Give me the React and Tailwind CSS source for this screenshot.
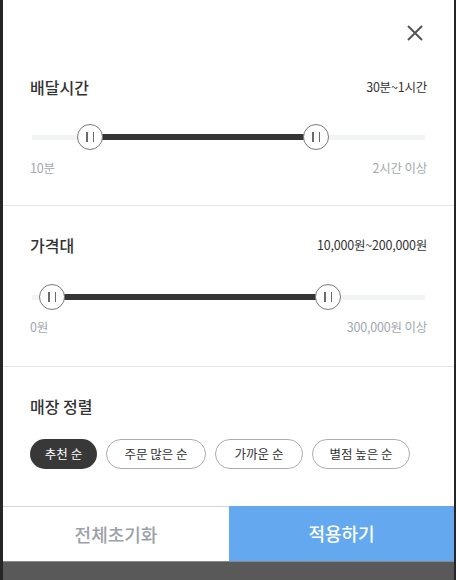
import React from "react";

const FONT = { fontFamily: '"Noto Sans CJK KR", "Noto Sans", sans-serif' };

function Thumb({ x }) {
  return (
    <div
      className="absolute top-1/2 w-[26px] h-[26px] -ml-[13px] -mt-[13px] rounded-full bg-white border-[1.5px] border-[#7a7a7a] flex items-center justify-center gap-[5px]"
      style={{ left: x }}
    >
      <span className="block w-[1.5px] h-[10px] bg-[#6a6a6a]" />
      <span className="block w-[1.5px] h-[10px] bg-[#6a6a6a]" />
    </div>
  );
}

function RangeSlider({ a, b }) {
  return (
    <div className="relative h-[26px] mx-[2px]">
      <div className="absolute left-0 right-0 top-1/2 -mt-[2px] h-[5px] bg-[#f2f3f5]" />
      <div
        className="absolute top-1/2 -mt-[3px] h-[6px] bg-[#353535]"
        style={{ left: a, width: b - a }}
      />
      <Thumb x={a} />
      <Thumb x={b} />
    </div>
  );
}

function Section({ title, value, a, b, minLabel, maxLabel, sliderGap, labelGap }) {
  return (
    <div className="px-[27px]">
      <div className="flex items-center justify-between h-[20px]">
        <span className="text-[16px] font-medium text-[#333]">{title}</span>
        <span className="text-[12.5px] text-[#333] tracking-[-0.2px]">{value}</span>
      </div>
      <div className={sliderGap}>
        <RangeSlider a={a} b={b} />
      </div>
      <div className={`${labelGap} h-[18px] flex items-center justify-between text-[12.5px] text-[#a3a8b0] tracking-[-0.2px]`}>
        <span>{minLabel}</span>
        <span>{maxLabel}</span>
      </div>
    </div>
  );
}

export default function App() {
  const chips = [
    { label: "추천 순", w: "w-[67px]", active: true },
    { label: "주문 많은 순", w: "w-[100px]" },
    { label: "가까운 순", w: "w-[88px]" },
    { label: "별점 높은 순", w: "w-[98px]" },
  ];
  return (
    <div className="w-[456px] h-[580px] bg-[#262626] pl-[3px] pr-[2px] flex flex-col" style={FONT}>
      <div className="h-[561px] bg-white flex flex-col">
        <div className="h-[66px] flex items-center justify-end pr-[31px]">
          <svg width="16" height="16" viewBox="0 0 16 16" className="block">
            <path d="M1 1 L15 15 M15 1 L1 15" stroke="#555" strokeWidth="2" strokeLinecap="butt" />
          </svg>
        </div>
        <div className="pt-[11px] pb-[28px] border-b border-[#e6e6e6]">
          <Section
            title="배달시간"
            value="30분~1시간"
            a={58}
            b={284}
            minLabel="10분"
            maxLabel="2시간 이상"
            sliderGap="mt-[27px]"
            labelGap="mt-[9px]"
          />
        </div>
        <div className="pt-[29px] pb-[30px] border-b border-[#e6e6e6]">
          <Section
            title="가격대"
            value="10,000원~200,000원"
            a={20}
            b={296}
            minLabel="0원"
            maxLabel="300,000원 이상"
            sliderGap="mt-[29px]"
            labelGap="mt-[8px]"
          />
        </div>
        <div className="flex-1 px-[27px] pt-[29px]">
          <div className="h-[20px] flex items-center">
            <span className="text-[16px] font-medium text-[#333]">매장 정렬</span>
          </div>
          <div className="mt-[23px] flex gap-[9px]">
            {chips.map((c) => (
              <div
                key={c.label}
                className={`${c.w} h-[30px] rounded-full flex items-center justify-center text-[12.5px] ${
                  c.active
                    ? "bg-[#383838] text-white"
                    : "bg-white border border-[#adadad] text-[#333]"
                }`}
              >
                {c.label}
              </div>
            ))}
          </div>
        </div>
        <div className="h-[55px] flex">
          <button className="w-[226px] h-full bg-white border-t border-[#d6d6d6] text-[18px] text-[#9aa1a9] font-medium" style={FONT}>
            전체초기화
          </button>
          <button className="flex-1 h-full bg-[#64a9ef] text-[18px] text-white font-medium" style={FONT}>
            적용하기
          </button>
        </div>
      </div>
      <div className="flex-1 bg-[#595959] border-t border-[#8a8a8a]" />
    </div>
  );
}
